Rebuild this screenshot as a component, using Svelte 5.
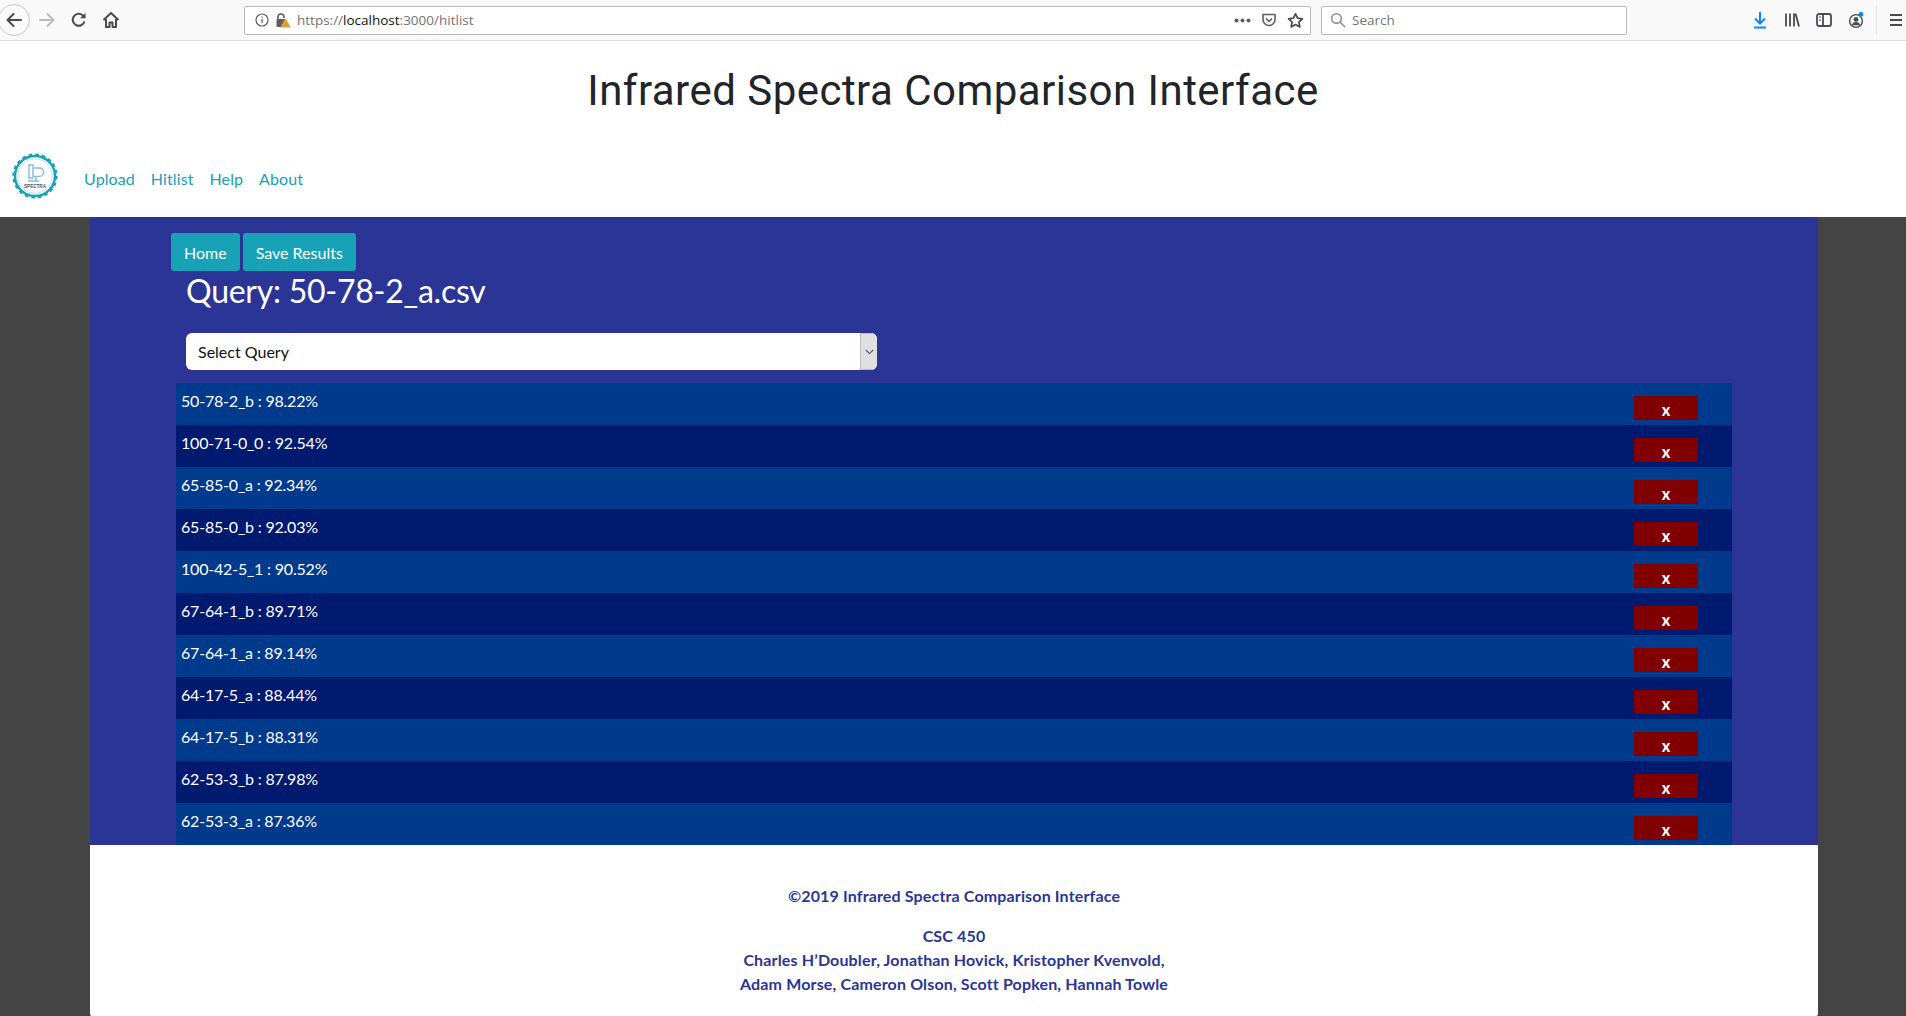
<script lang="ts">
	interface Hit {
		name: string;
		score: string;
	}

	const hits: Hit[] = [
		{ name: '50-78-2_b', score: '98.22%' },
		{ name: '100-71-0_0', score: '92.54%' },
		{ name: '65-85-0_a', score: '92.34%' },
		{ name: '65-85-0_b', score: '92.03%' },
		{ name: '100-42-5_1', score: '90.52%' },
		{ name: '67-64-1_b', score: '89.71%' },
		{ name: '67-64-1_a', score: '89.14%' },
		{ name: '64-17-5_a', score: '88.44%' },
		{ name: '64-17-5_b', score: '88.31%' },
		{ name: '62-53-3_b', score: '87.98%' },
		{ name: '62-53-3_a', score: '87.36%' }
	];
</script>

<div class="browser">
	<header class="toolbar">
		<div class="nav">
			<button class="back" aria-label="Back">
				<svg width="18" height="18" viewBox="0 0 18 18" fill="none" stroke="#4a4a4f" stroke-width="2" stroke-linecap="round" stroke-linejoin="round"><path d="M16 9H2.5M8.5 3L2.5 9l6 6" /></svg>
			</button>
			<svg class="forward" width="18" height="18" viewBox="0 0 18 18" fill="none" stroke="#c4b8b8" stroke-width="2" stroke-linecap="round" stroke-linejoin="round"><path d="M2 9h13.5M9.5 3l6 6-6 6" /></svg>
			<svg class="reload" width="18" height="18" viewBox="0 0 18 18" fill="none" stroke="#4a4a4f" stroke-width="2"><path d="M14.5 10.5A6 6 0 1 1 12.6 4.2L15 6" /><path d="M15.5 1.8v5.4h-5.4z" fill="#4a4a4f" stroke="none" /></svg>
			<svg class="home" width="18" height="18" viewBox="0 0 18 18" fill="none" stroke="#4a4a4f" stroke-width="2" stroke-linejoin="round"><path d="M1.5 9L9 2l7.5 7" /><path d="M4 8v8h3.5v-4.5h3V16H14V8" /></svg>
		</div>
		<div class="urlbar">
			<svg width="14" height="14" viewBox="0 0 14 14" fill="none" stroke="#5c5c66" stroke-width="1.2"><circle cx="7" cy="7" r="6" /><path d="M7 6v4.2M7 3.4v1.4" /></svg>
			<svg class="lock" width="16" height="16" viewBox="0 0 16 16"><path d="M3 8V5a3 3 0 0 1 6 0v1" fill="none" stroke="#5c5c66" stroke-width="1.6" /><rect x="1.5" y="7" width="9" height="8" rx="1" fill="#5c5c66" /><path d="M10.5 6L15.8 15.5H5.2z" fill="#e39a3b" /></svg>
			<span class="url">https://<b>localhost</b>:3000/hitlist</span>
			<span class="url-end">
				<svg width="17" height="5" viewBox="0 0 17 5" fill="#5c5c66"><circle cx="2.5" cy="2.5" r="2" /><circle cx="8.5" cy="2.5" r="2" /><circle cx="14.5" cy="2.5" r="2" /></svg>
				<svg width="16" height="16" viewBox="0 0 16 16" fill="none" stroke="#5c5c66" stroke-width="1.6" stroke-linejoin="round"><path d="M2 2.5h12v5a6 6 0 0 1-12 0z" /><path d="M5 6.5l3 3 3-3" /></svg>
				<svg width="17" height="17" viewBox="0 0 17 17" fill="none" stroke="#4a4a4f" stroke-width="1.7" stroke-linejoin="round"><path d="M8.5 1.8l2.1 4.4 4.8.6-3.5 3.3.9 4.8-4.3-2.3-4.3 2.3.9-4.8L1.6 6.8l4.8-.6z" /></svg>
			</span>
		</div>
		<div class="searchbar">
			<svg width="16" height="16" viewBox="0 0 16 16" fill="none" stroke="#8a8a90" stroke-width="1.5"><circle cx="6.5" cy="6.5" r="4.8" /><path d="M10 10l5 5" /></svg>
			<span>Search</span>
		</div>
		<div class="tools">
			<svg width="16" height="18" viewBox="0 0 16 18" fill="none" stroke="#0a84ff" stroke-width="2"><path d="M8 1v11M3 7.5L8 12.5l5-5M2 16.5h12" /></svg>
			<svg width="16" height="16" viewBox="0 0 16 16" fill="none" stroke="#4a4a4f" stroke-width="1.8"><path d="M2 1.5v13M6 1.5v13M10 1.5v13M11.5 1.5l3.5 13" /></svg>
			<svg width="16" height="16" viewBox="0 0 16 16" fill="none" stroke="#4a4a4f" stroke-width="1.8"><rect x="1" y="2" width="14" height="12" rx="2" /><path d="M7 2v12" /><path d="M3 5h2M3 8h2" stroke-width="1.2" /></svg>
			<svg class="account" width="16" height="18" viewBox="0 0 16 18"><circle cx="8" cy="10" r="6.4" fill="none" stroke="#4a4a4f" stroke-width="1.4" /><circle cx="8" cy="8.4" r="2.4" fill="#4a4a4f" /><path d="M3.8 14.2a4.4 4.4 0 0 1 8.4 0z" fill="#4a4a4f" /><circle cx="13" cy="3.4" r="2.4" fill="#0a84ff" /></svg>
			<div class="divider"></div>
			<svg class="menu" width="14" height="14" viewBox="0 0 14 14" fill="none" stroke="#4a4a4f" stroke-width="2"><path d="M1 2h12M1 7h12M1 12h12" /></svg>
		</div>
	</header>

	<div class="site-head">
		<h1>Infrared Spectra Comparison Interface</h1>
		<nav class="navbar">
			<svg class="logo" width="46" height="48" viewBox="0 0 46 48">
				<circle cx="23" cy="24" r="21.4" fill="none" stroke="#17a2b8" stroke-width="2.4" stroke-dasharray="3.6 3.1" />
				<circle cx="23" cy="24" r="20" fill="#fff" stroke="#17a2b8" stroke-width="2.4" />
				<circle cx="23" cy="24" r="17.2" fill="none" stroke="#a8dbe6" stroke-width="0.8" />
				<path d="M17 13h4v13h-4zM22 16h5.5a4.2 4.2 0 0 1 0 8.4H22M24 24.4v5M16 29h11" fill="none" stroke="#8ab8dc" stroke-width="1.4" />
				<text class="logo-text" x="23" y="35.5" text-anchor="middle">SPECTRA</text>
			</svg>
			<a href="#upload">Upload</a>
			<a href="#hitlist">Hitlist</a>
			<a href="#help">Help</a>
			<a href="#about">About</a>
		</nav>
	</div>

	<main class="panel">
		<div class="actions">
			<button class="teal">Home</button>
			<button class="teal">Save Results</button>
		</div>
		<h2>Query: 50-78-2_a.csv</h2>
		<div class="select">
			<span>Select Query</span>
			<span class="select-arrow">
				<svg width="9" height="6" viewBox="0 0 9 6" fill="none" stroke="#55555c" stroke-width="1.1"><path d="M0.8 1l3.7 3.6L8.2 1" /></svg>
			</span>
		</div>
		<div class="hits">
			{#each hits as hit (hit.name)}
				<div class="hit">
					<span class="hit-label">{hit.name} : {hit.score}</span>
					<button class="remove">x</button>
				</div>
			{/each}
		</div>
	</main>

	<footer class="foot">
		<p class="copy">©2019 Infrared Spectra Comparison Interface</p>
		<p class="credits">
			CSC 450<br />
			Charles H’Doubler, Jonathan Hovick, Kristopher Kvenvold,<br />
			Adam Morse, Cameron Olson, Scott Popken, Hannah Towle
		</p>
	</footer>
</div>

<style>
	:global(body) {
		margin: 0;
		background: #444444;
		font-family: Lato, "Liberation Sans", sans-serif;
	}

	.browser {
		height: 1016px;
		overflow: hidden;
		display: flex;
		flex-direction: column;
	}

	.toolbar {
		height: 40px;
		flex: none;
		background: #f9f9fa;
		border-bottom: 1px solid #dcdcdc;
		display: flex;
		align-items: center;
		font-family: "Open Sans", sans-serif;
	}

	.nav {
		width: 244px;
		flex: none;
		display: flex;
		align-items: center;
	}

	.back {
		width: 32px;
		height: 32px;
		margin-left: -2px;
		padding: 0;
		border: 1px solid #c8c8c8;
		border-radius: 50%;
		background: #fafafa;
		display: flex;
		align-items: center;
		justify-content: center;
	}

	.forward {
		margin-left: 8px;
	}

	.reload {
		margin-left: 14px;
	}

	.home {
		margin-left: 14px;
	}

	.urlbar {
		width: 1067px;
		height: 29px;
		flex: none;
		box-sizing: border-box;
		background: #fff;
		border: 1px solid #b9b9bb;
		border-radius: 2px;
		display: flex;
		align-items: center;
		padding: 0 6px 0 10px;
		font-size: 13.5px;
		color: #737373;
	}

	.lock {
		margin-left: 6px;
	}

	.url {
		margin-left: 6px;
	}

	.url b {
		font-weight: 400;
		color: #111;
	}

	.url-end {
		margin-left: auto;
		display: flex;
		align-items: center;
		gap: 10px;
	}

	.searchbar {
		width: 306px;
		height: 29px;
		flex: none;
		margin-left: 10px;
		box-sizing: border-box;
		background: #fff;
		border: 1px solid #b9b9bb;
		border-radius: 2px;
		display: flex;
		align-items: center;
		gap: 6px;
		padding-left: 8px;
		font-size: 13.5px;
		color: #737373;
	}

	.tools {
		flex: 1;
		display: flex;
		align-items: center;
		padding-left: 125px;
		gap: 16px;
	}

	.divider {
		width: 1px;
		height: 30px;
		background: #e4e4e4;
		margin-left: -4px;
	}

	.menu {
		margin-left: -4px;
	}

	.site-head {
		height: 176px;
		flex: none;
		background: #fff;
		display: flex;
		flex-direction: column;
	}

	h1 {
		margin: 26px 0 0;
		height: 83px;
		text-align: center;
		font-family: Roboto, sans-serif;
		font-weight: 400;
		font-size: 42px;
		letter-spacing: 0.47px;
		line-height: 48px;
		color: #212529;
	}

	.navbar {
		display: flex;
		align-items: center;
		padding-left: 12px;
		height: 52px;
	}

	.logo {
		margin-right: 26px;
	}

	.logo-text {
		font-family: "Liberation Sans", sans-serif;
		font-weight: 700;
		font-size: 4.6px;
		fill: #50505a;
	}

	.navbar a {
		font-size: 16px;
		letter-spacing: 0.1px;
		color: #17a2b8;
		text-decoration: none;
		margin-right: 16px;
		padding-top: 5px;
	}

	.panel {
		width: 1728px;
		height: 628px;
		flex: none;
		box-sizing: border-box;
		margin-left: 90px;
		padding: 16px 86px 0 81px;
		background: #2b3595;
	}

	.actions {
		display: flex;
		gap: 3px;
	}

	.teal {
		height: 38px;
		padding: 0 13px;
		border: none;
		border-radius: 3px;
		background: #17a2b8;
		color: #fff;
		font-family: inherit;
		font-size: 16px;
	}

	h2 {
		margin: 0 0 0 15px;
		height: 62px;
		font-weight: 400;
		font-size: 32px;
		line-height: 38px;
		letter-spacing: -0.25px;
		padding-top: 1px;
		box-sizing: border-box;
		color: #fff;
	}

	.select {
		width: 691px;
		height: 37px;
		margin-left: 15px;
		box-sizing: border-box;
		background: #fff;
		border-radius: 6px;
		display: flex;
		align-items: center;
		justify-content: space-between;
		padding-left: 12px;
		font-size: 16px;
		color: #111;
		overflow: hidden;
	}

	.select-arrow {
		width: 17px;
		height: 100%;
		background: #e0e0e0;
		border: 1px solid #c4b8b8;
		border-right: none;
		box-sizing: border-box;
		display: flex;
		align-items: center;
		justify-content: center;
	}

	.hits {
		margin: 13px 0 0 5px;
		width: 1556px;
	}

	.hit {
		height: 42px;
		box-sizing: border-box;
		background: #003a8c;
		display: flex;
		justify-content: space-between;
		padding: 0 34px 0 6px;
		color: #fff;
		font-size: 16px;
	}

	.hit:nth-child(even) {
		background: #001a70;
	}

	.hit-label {
		line-height: 36px;
		letter-spacing: -0.2px;
		margin-left: -1px;
	}

	.remove {
		width: 64px;
		height: 24px;
		margin-top: 13px;
		padding: 4px 0 0;
		border: none;
		background: #800000;
		color: #fff;
		font-family: inherit;
		font-weight: 900;
		font-size: 16px;
		line-height: 18px;
	}

	.foot {
		width: 1728px;
		flex: 1;
		margin-left: 90px;
		background: #fff;
		border-radius: 0 0 2px 2px;
		text-align: center;
		color: #2b3595;
		font-weight: 700;
		font-size: 16px;
		letter-spacing: 0.15px;
		line-height: 24px;
		padding-top: 39px;
		box-sizing: border-box;
	}

	.foot p {
		margin: 0 0 16px;
	}
</style>
